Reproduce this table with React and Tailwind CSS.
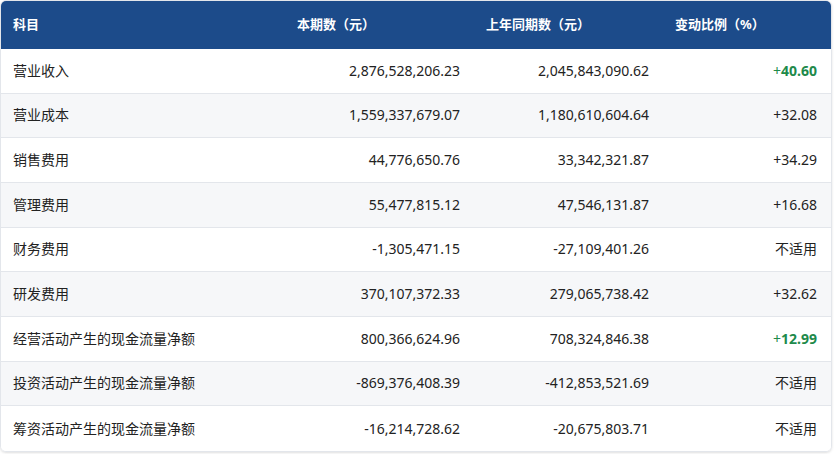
import React from 'react';

const rows = [
  { name: '营业收入', cur: '2,876,528,206.23', prev: '2,045,843,090.62', change: '+40.60', up: true },
  { name: '营业成本', cur: '1,559,337,679.07', prev: '1,180,610,604.64', change: '+32.08' },
  { name: '销售费用', cur: '44,776,650.76', prev: '33,342,321.87', change: '+34.29' },
  { name: '管理费用', cur: '55,477,815.12', prev: '47,546,131.87', change: '+16.68' },
  { name: '财务费用', cur: '-1,305,471.15', prev: '-27,109,401.26', change: '不适用' },
  { name: '研发费用', cur: '370,107,372.33', prev: '279,065,738.42', change: '+32.62' },
  { name: '经营活动产生的现金流量净额', cur: '800,366,624.96', prev: '708,324,846.38', change: '+12.99', up: true },
  { name: '投资活动产生的现金流量净额', cur: '-869,376,408.39', prev: '-412,853,521.69', change: '不适用' },
  { name: '筹资活动产生的现金流量净额', cur: '-16,214,728.62', prev: '-20,675,803.71', change: '不适用' },
];

const cols = 'grid grid-cols-[284px_189px_189px_1fr] items-center';

const Change = ({ value, up }) => {
  if (!up) return value;
  return (
    <span className="text-[#1e8a4b]">
      <span className="font-normal">+</span>
      <span className="font-bold">{value.slice(1)}</span>
    </span>
  );
};

const App = () => {
  return (
    <div className="bg-white w-[834px] h-[454px]" style={{ fontFamily: '"Noto Sans", "Noto Sans CJK SC", sans-serif' }}>
      <div className="w-[832px] border border-[#e3e6eb] rounded-md overflow-hidden shadow-sm">
        <div className={`${cols} h-12 bg-[#1c4b8a] text-white text-[13px] font-bold`}>
          <div className="pl-3">科目</div>
          <div className="pl-3">本期数（元）</div>
          <div className="pl-3">上年同期数（元）</div>
          <div className="pl-3">变动比例（%）</div>
        </div>
        {rows.map((row, i) => (
          <div
            key={row.name}
            className={`${cols} h-[44.67px] text-sm text-[#222] ${i % 2 ? 'bg-[#f6f7f9]' : 'bg-white'} ${i < rows.length - 1 ? 'border-b border-[#e3e6eb]' : ''}`}
          >
            <div className="pl-3">{row.name}</div>
            <div className="pr-3.5 text-right">{row.cur}</div>
            <div className="pr-3.5 text-right">{row.prev}</div>
            <div className="pr-3.5 text-right">
              <Change value={row.change} up={row.up} />
            </div>
          </div>
        ))}
      </div>
    </div>
  );
};

export default App;
